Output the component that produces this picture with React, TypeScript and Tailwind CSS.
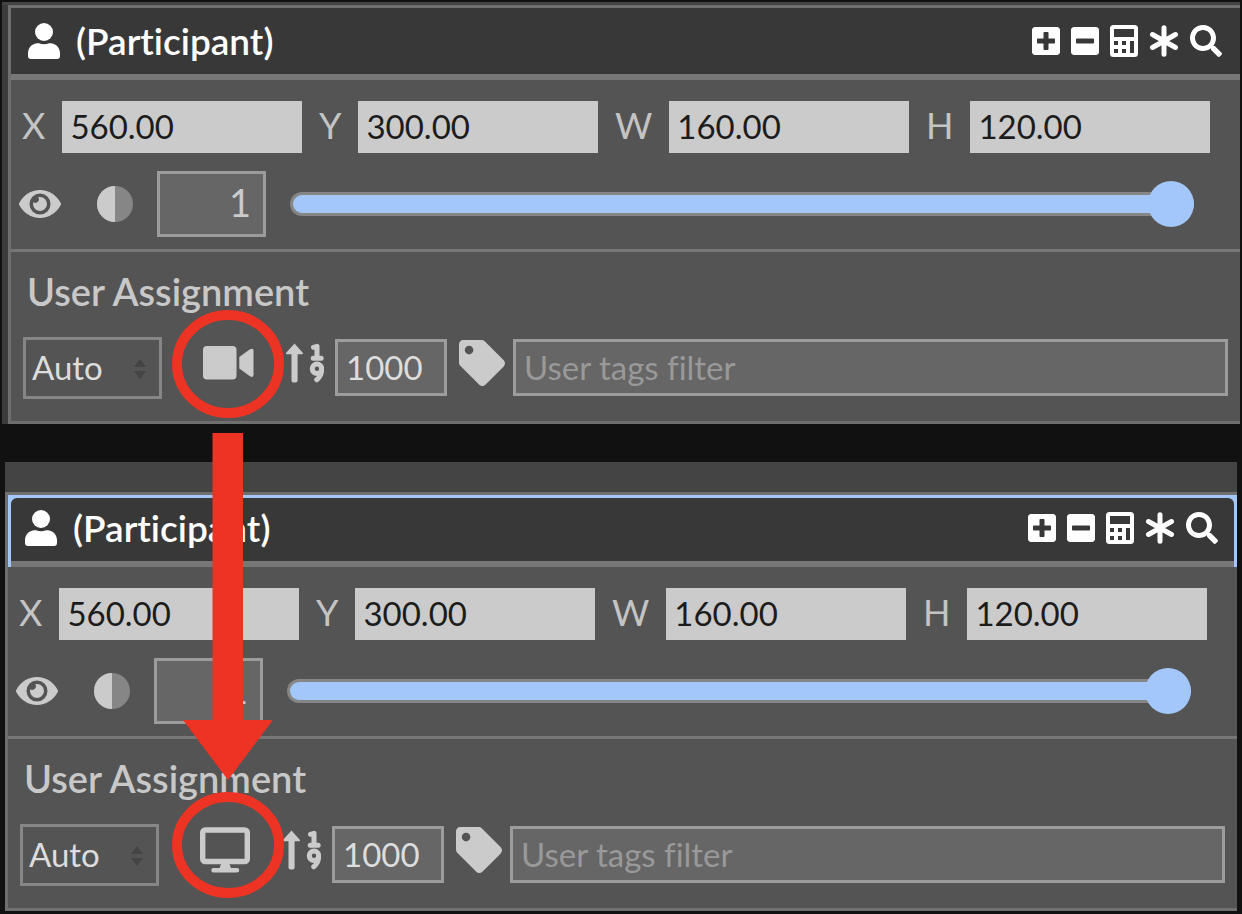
import { Fragment, useId, useState } from "react";
import { FaEye, FaMinusSquare, FaPlusSquare, FaSearch, FaTag } from "react-icons/fa";

function UserIcon() {
  return (
    <svg viewBox="0 0 32 36" className="h-9 w-8" fill="currentColor" aria-hidden="true">
      <circle cx="16" cy="9" r="9" />
      <path d="M9.500 20.300h1.500q5 1.700 10 0h1.500c5.500.3 9.500 4.500 9.500 10v2.700q0 3-3 3H3q-3 0-3-3v-2.700c0-5.500 4-9.700 9.500-10z" />
    </svg>
  );
}

function CalculatorIcon() {
  return (
    <svg viewBox="0 0 28 32" className="h-8 w-7" aria-hidden="true">
      <path
        fill="currentColor"
        fillRule="evenodd"
        d="M3.500 0h21q3.500 0 3.500 3.500v25q0 3.500-3.500 3.500h-21q-3.500 0-3.500-3.500v-25q0-3.500 3.500-3.500zM4 4v8h20V4zM4 16v4h4v-4zM12 16v4h4v-4zM20 16v12h4V16zM4 24v4h4v-4zM12 24v4h4v-4z"
      />
    </svg>
  );
}

function AsteriskIcon() {
  return (
    <svg viewBox="1 0 30 32" className="h-8 w-[30px]" aria-hidden="true">
      <path
        d="M16 2.700v26.600M4.500 9.500l23 13M27.500 9.500l-23 13"
        stroke="currentColor"
        strokeWidth="5"
        strokeLinecap="round"
      />
    </svg>
  );
}

function ContrastIcon() {
  return (
    <svg viewBox="0 0 36 36" className="size-9" aria-hidden="true">
      <circle cx="18" cy="18" r="18" fill="#868686" />
      <path d="M18 0a18 18 0 0 0 0 36z" fill="#cbcbcb" />
    </svg>
  );
}

function VideoIcon() {
  return (
    <svg viewBox="0 0 51 34" className="h-[34px] w-[51px]" fill="currentColor" aria-hidden="true">
      <rect width="33.500" height="33.500" rx="4" />
      <path d="M36.300 11 47 3.300q3.500-1.800 3.500 1.500v24q0 3.300-3.500 1.500l-10.700-7.800z" />
    </svg>
  );
}

function MonitorIcon() {
  return (
    <svg viewBox="0 0 50 46" className="h-[46px] w-[50px]" aria-hidden="true">
      <rect x="2.700" y="3" width="44.600" height="31.500" rx="2.500" fill="none" stroke="currentColor" strokeWidth="5.400" />
      <path d="M21.500 36h7.500l2 5h6a2.200 2.200 0 0 1 0 4.500H13.500a2.200 2.200 0 0 1 0-4.500h6z" fill="currentColor" />
    </svg>
  );
}

function SortNumericIcon() {
  return (
    <svg viewBox="0 0 38 40" className="h-10 w-[38px]" aria-hidden="true">
      <path
        d="M8.500.5 16.700 9.700q1 1.500-.8 1.500H11.600V37.500q0 2-2 2H7.500q-2 0-2-2V11.200H1q-1.800 0-.8-1.500z"
        fill="currentColor"
      />
      <g fill="none" stroke="currentColor" strokeWidth="5" strokeLinejoin="round" strokeLinecap="round">
        <path d="M27.500 4.300 31 3.300v11M27.200 15.300h8" />
        <circle cx="31" cy="25.800" r="4.700" />
        <path d="M35.700 26.500q-.2 6.500-5 10.300" />
      </g>
    </svg>
  );
}

const geometry = [
  { label: "X", value: "560.00" },
  { label: "Y", value: "300.00" },
  { label: "W", value: "160.00" },
  { label: "H", value: "120.00" },
];

function GeometryFields() {
  const id = useId();
  return (
    <div className="flex items-center gap-[17px] pt-[21px] pr-[30px] pl-[11px]">
      {geometry.map(({ label, value }) => (
        <Fragment key={label}>
          <label htmlFor={id + label} className="pb-1 text-4xl text-[#c4c4c4]">
            {label}
          </label>
          <input
            id={id + label}
            defaultValue={value}
            className="h-[52px] min-w-0 flex-1 bg-[#cbcbcb] px-2 pb-0.5 text-[33px] text-[#1c1c1c] outline-none"
          />
        </Fragment>
      ))}
    </div>
  );
}

function ParticipantPanel({ source, selected = false }: { source: "camera" | "screen"; selected?: boolean }) {
  const [opacity, setOpacity] = useState("1");
  return (
    <section className="border-b-3 border-l-3 border-[#6f6f6f] bg-[#545454]">
      <header className={selected ? "border-x-3 border-t-3 border-[#a3c7f8] bg-[#a3c7f8]" : ""}>
        <div
          className={`flex items-center border-b-6 border-[#777777] bg-[#383838] text-white ${
            selected ? "h-[69px] rounded-t-md pr-4 pb-1 pl-3.5" : "h-[72px] pr-[18px] pl-[17px]"
          }`}
        >
          <UserIcon />
          <h2 className="ml-4 flex-1 text-[37px] font-semibold">(Participant)</h2>
          <div className="flex items-center gap-[11px]">
            <button aria-label="Add"><FaPlusSquare className="h-8 w-7" /></button>
            <button aria-label="Remove"><FaMinusSquare className="h-8 w-7" /></button>
            <button aria-label="Calculate"><CalculatorIcon /></button>
            <button aria-label="Wildcard"><AsteriskIcon /></button>
            <button aria-label="Search"><FaSearch className="size-8" /></button>
          </div>
        </div>
      </header>

      <GeometryFields />

      <div className="flex h-[99px] items-center border-b-3 border-[#777777] pt-1.5 pr-[46px] pl-2 text-[#cbcbcb]">
        <button aria-label="Toggle visibility"><FaEye className="h-10 w-[42px]" /></button>
        <span className="mr-6 ml-9"><ContrastIcon /></span>
        <input
          aria-label="Opacity"
          value={opacity}
          onChange={(e) => setOpacity(e.target.value)}
          className="h-[66px] w-[109px] border-3 border-[#9c9c9c] bg-[#666666] px-3 pb-1 text-right text-[38px] outline-none"
        />
        <input
          type="range"
          aria-label="Opacity slider"
          min="0"
          max="1"
          step="0.01"
          value={opacity}
          onChange={(e) => setOpacity(e.target.value)}
          className="ml-6 h-6 min-w-0 flex-1 appearance-none rounded-full border-3 border-r-0 border-[#868686] bg-[#a3c7f8] [&::-webkit-slider-thumb]:size-[46px] [&::-webkit-slider-thumb]:appearance-none [&::-webkit-slider-thumb]:rounded-full [&::-webkit-slider-thumb]:bg-[#a3c7f8]"
        />
      </div>

      <h3 className="px-4 pt-3.5 text-[38px] leading-[50px] font-semibold text-[#c8c8c8]">User Assignment</h3>
      <div className="flex h-[105px] items-center px-3 pb-0.5 text-[#cbcbcb]">
        <div className="relative">
          <select
            aria-label="Assignment mode"
            className="h-[62px] w-[139px] appearance-none border-3 border-[#868686] bg-transparent px-1.5 text-[33px] text-[#dddddd] outline-none"
          >
            <option>Auto</option>
          </select>
          <svg viewBox="0 0 12 20" className="pointer-events-none absolute top-[22px] right-4 h-5 w-3" aria-hidden="true">
            <path d="M6 0 12 8H0zM6 20 0 12h12z" fill="#444444" />
          </svg>
        </div>
        <button aria-label={source === "camera" ? "Camera" : "Screen share"} className="mb-2.5 ml-[41px] flex h-12 w-[51px] items-center">
          {source === "camera" ? <VideoIcon /> : <MonitorIcon />}
        </button>
        <span className="mb-2.5 ml-8"><SortNumericIcon /></span>
        <input
          aria-label="Order"
          defaultValue="1000"
          className="ml-[11px] h-[57px] w-28 border-3 border-[#9c9c9c] bg-[#666666] px-2 pb-0.5 text-[33px] text-[#dddddd] outline-none"
        />
        <FaTag className="mb-2.5 ml-3 size-[46px] shrink-0" aria-hidden="true" />
        <input
          aria-label="User tags"
          placeholder="User tags filter"
          className="ml-2 h-[57px] min-w-0 flex-1 border-3 border-[#9c9c9c] bg-[#666666] px-2 pb-0.5 text-[33px] outline-none placeholder:text-[#999999]"
        />
      </div>
    </section>
  );
}

export default function App() {
  return (
    <main className="relative min-h-screen bg-[#111111] pt-0.5 font-['Lato',sans-serif] [font-variant-ligatures:none]">
      <div className="mr-0.5 ml-0.5 border-t-3 border-[#444444] bg-[#3c3c3c] pl-1.5">
        <div className="border-t-3 border-[#6f6f6f]">
          <ParticipantPanel source="camera" />
        </div>
      </div>
      <div className="mt-[38px] mr-[5px] ml-[5px] bg-[#444444] pt-[30px]">
        <div className="border-t-3 border-[#6f6f6f]">
          <ParticipantPanel source="screen" selected />
        </div>
      </div>
      <svg
        viewBox="0 0 112 590"
        className="pointer-events-none absolute top-[309px] left-[172px] h-[590px] w-28"
        aria-hidden="true"
      >
        <g fill="none" stroke="#ed3324" strokeWidth="10">
          <rect x="5" y="6" width="102" height="98" rx="51" ry="49" />
          <rect x="5" y="488" width="102" height="96" rx="51" ry="48" />
        </g>
        <path d="M40.500 124h30.500v287h30l-45 60-45-60h29.500z" fill="#ed3324" />
      </svg>
    </main>
  );
}
